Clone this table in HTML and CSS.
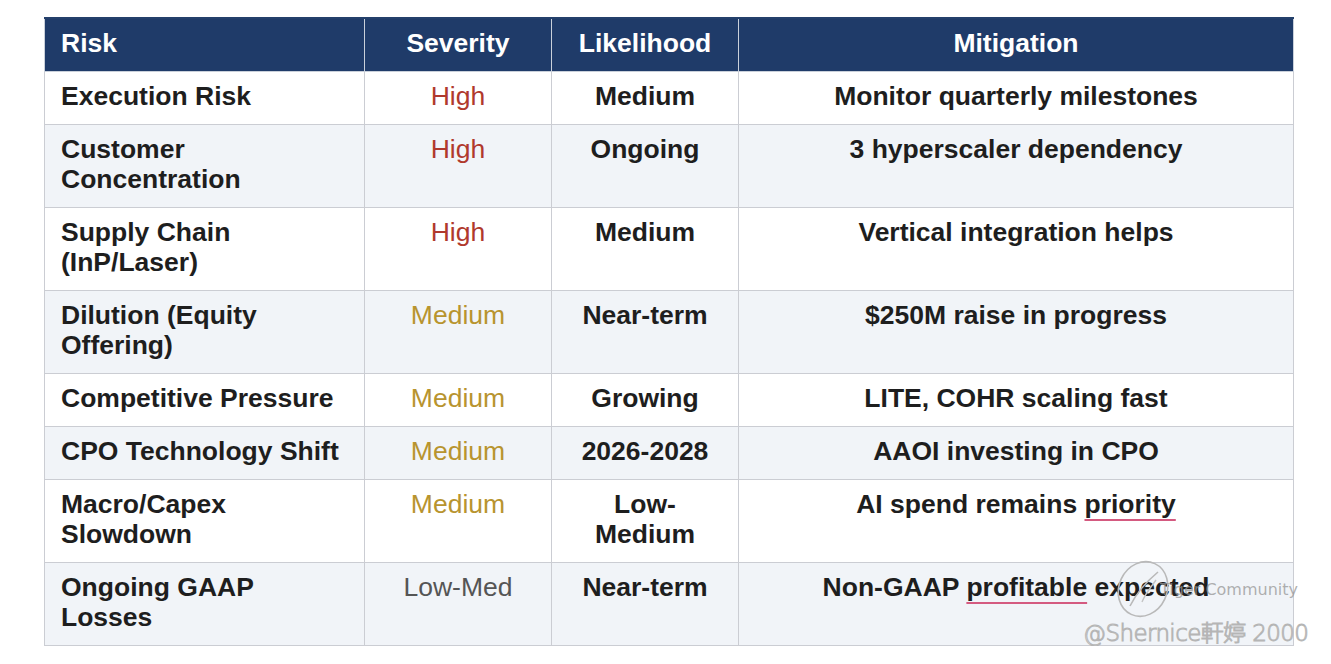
FILE: index.html
```html
<!DOCTYPE html>
<html>
<head>
<meta charset="utf-8">
<link rel="stylesheet" href="styles.css">
</head>
<body>
<div class="page">
<table class="risk">
  <colgroup>
    <col class="c-risk"><col class="c-sev"><col class="c-like"><col class="c-mit">
  </colgroup>
  <thead>
    <tr><th class="left">Risk</th><th>Severity</th><th>Likelihood</th><th>Mitigation</th></tr>
  </thead>
  <tbody>
    <tr><td class="name">Execution Risk</td><td class="high">High</td><td class="lk">Medium</td><td class="mit">Monitor quarterly milestones</td></tr>
    <tr class="alt"><td class="name">Customer<br>Concentration</td><td class="high">High</td><td class="lk">Ongoing</td><td class="mit">3 hyperscaler dependency</td></tr>
    <tr><td class="name">Supply Chain<br>(InP/Laser)</td><td class="high">High</td><td class="lk">Medium</td><td class="mit">Vertical integration helps</td></tr>
    <tr class="alt"><td class="name">Dilution (Equity<br>Offering)</td><td class="med">Medium</td><td class="lk">Near-term</td><td class="mit">$250M raise in progress</td></tr>
    <tr><td class="name">Competitive Pressure</td><td class="med">Medium</td><td class="lk">Growing</td><td class="mit">LITE, COHR scaling fast</td></tr>
    <tr class="alt"><td class="name">CPO Technology Shift</td><td class="med">Medium</td><td class="lk">2026-2028</td><td class="mit">AAOI investing in CPO</td></tr>
    <tr><td class="name">Macro/Capex<br>Slowdown</td><td class="med">Medium</td><td class="lk">Low-<br>Medium</td><td class="mit">AI spend remains <span class="spell">priority</span></td></tr>
    <tr class="alt"><td class="name">Ongoing GAAP<br>Losses</td><td class="low">Low-Med</td><td class="lk">Near-term</td><td class="mit">Non-GAAP <span class="spell">profitable</span> expected</td></tr>
  </tbody>
</table>
<div class="watermark">
  <div class="wm-top">
    <svg class="wm-logo" width="62" height="62" viewBox="0 0 62 62">
      <ellipse cx="31" cy="31" rx="24" ry="28" transform="rotate(25 31 31)" fill="none" stroke="#b9b9b9" stroke-width="1.6"/>
      <path d="M18 48 C24 36 34 24 46 14" fill="none" stroke="#b9b9b9" stroke-width="1.6"/>
      <path d="M30 44 C34 34 40 28 44 22" fill="none" stroke="#c4c4c4" stroke-width="1.4"/>
    </svg>
    <span class="wm-name">Tiger Community</span>
  </div>
  <div class="wm-user">@Shernice軒婷 2000</div>
</div>
</div>
</body>
</html>
```

FILE: styles.css
```css
html, body {
  margin: 0;
  padding: 0;
  background: #ffffff;
}
.page {
  position: relative;
  padding: 17px 0 0 44px;
  font-family: "Liberation Sans", Arial, sans-serif;
}
.risk {
  border-collapse: collapse;
  table-layout: fixed;
  width: 1249px;
  font-size: 26.5px;
  line-height: 30px;
  color: #1e1e1e;
}
.c-risk { width: 320px; }
.c-sev { width: 187px; }
.c-like { width: 187px; }
.c-mit { width: 555px; }
.risk th {
  background: #1f3b69;
  color: #ffffff;
  font-weight: bold;
  text-align: center;
  padding: 9px 16px 13px;
  height: 30px;
  border: 1px solid #c9d0da;
  border-top: 2px solid #24406b;
}
.risk th.left { text-align: left; }
.risk td {
  border: 1px solid #cbcdd3;
  padding: 9px 16px 13px 16px;
  vertical-align: top;
  text-align: center;
  background: #ffffff;
}
.risk tr.alt td { background: #f1f4f8; }
.risk td.name {
  text-align: left;
  font-weight: bold;
}
.risk td.lk, .risk td.mit { font-weight: bold; }
.risk td.high { color: #b0392d; }
.risk td.med { color: #b8942f; }
.risk td.low { color: #555555; }
.spell {
  text-decoration: underline;
  text-decoration-color: #d45a80;
  text-decoration-thickness: 2px;
  text-underline-offset: 6px;
}
.watermark {
  position: absolute;
  left: 1112px;
  top: 558px;
  width: 219px;
  pointer-events: none;
}
.wm-top {
  display: flex;
  align-items: center;
}
.wm-logo {
  flex: none;
}
.wm-name {
  margin-left: -14px;
  font-family: "DejaVu Sans", sans-serif;
  font-size: 16px;
  color: rgba(150, 150, 150, 0.75);
}
.wm-user {
  margin-left: -29px;
  margin-top: -6px;
  font-family: "DejaVu Sans", "Noto Sans CJK TC", sans-serif;
  font-weight: 200;
  font-size: 23px;
  color: rgba(255, 255, 255, 0.6);
  -webkit-text-stroke: 1px #b5b5b5;
  white-space: nowrap;
  letter-spacing: -0.6px;
}
```
